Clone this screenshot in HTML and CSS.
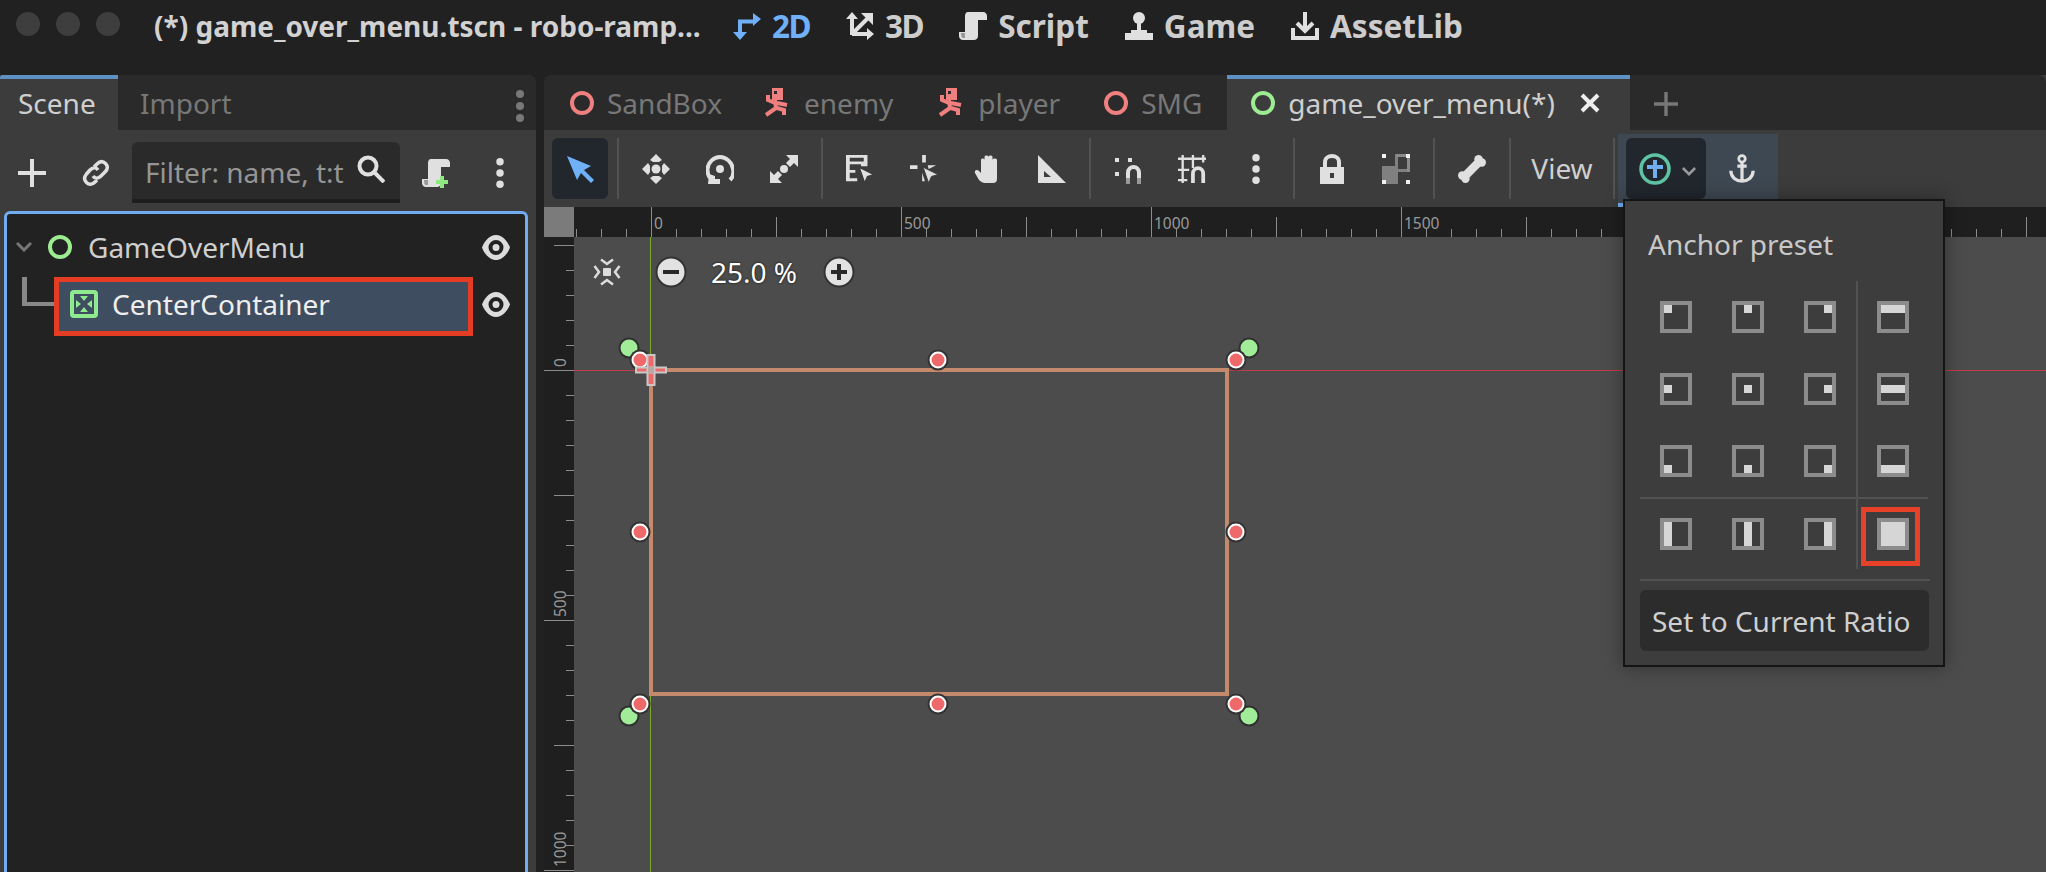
FILE: index.html
```html
<!DOCTYPE html>
<html lang="en">
<head>
    <meta charset="UTF-8">
    <title>game_over_menu.tscn - robo-ramp</title>
    <link rel="stylesheet" href="styles.css">
</head>
<body>
<svg class="defs" aria-hidden="true">
    <symbol id="i-2d" viewBox="0 0 28 28">
        <path d="M7 22V9.500H22" fill="none" stroke="currentColor" stroke-width="4"/>
        <path d="M0 20H14L7 28ZM20 1L28 7L20 14Z" fill="currentColor"/>
    </symbol>
    <symbol id="i-3d" viewBox="0 0 28 28">
        <path d="M6 23V6M6 22H23M6 22L23 5" fill="none" stroke="currentColor" stroke-width="4"/>
        <path d="M0 7L6 0L12 7ZM21 16L28 22L21 28ZM15 1H27V13Z" fill="currentColor"/>
    </symbol>
    <symbol id="i-script" viewBox="0 0 28 28">
        <path d="M9 0H24C26.500 0 28 2 28 4V8H19V24C19 26.500 17 28 15 28H4C1.500 28 0 26 0 24V20H6V4C6 2 7 0 9 0Z" fill="currentColor"/>
        <path d="M2 21H6V26H4C2.500 26 2 24 2 21Z" fill="#999"/>
    </symbol>
    <symbol id="i-game" viewBox="0 0 28 28">
        <circle cx="14" cy="6" r="6" fill="currentColor"/>
        <path d="M12 10H16V18H22V21H28V28H0V21H6V18H12Z" fill="currentColor"/>
    </symbol>
    <symbol id="i-asset" viewBox="0 0 28 28">
        <path d="M14 0V17M6 11L14 19L22 11M2 16V26H26V16" fill="none" stroke="currentColor" stroke-width="4"/>
    </symbol>
    <symbol id="i-runner" viewBox="0 0 28 30">
        <path fill-rule="evenodd" d="M9 0H20V12H9ZM11 3V6H14V3Z" fill="currentColor"/>
        <path d="M12 12L13 20L3 27M14 20L21 22L21 27M12 15L5 12L5 7M14 15L24 17" fill="none" stroke="currentColor" stroke-width="4"/>
    </symbol>
    <symbol id="i-eye" viewBox="0 0 28 25">
        <path fill-rule="evenodd" d="M14 0C7 0 2 7 0 12.500C2 18 7 25 14 25S26 18 28 12.500C26 7 21 0 14 0ZM14 5A7.500 7.500 0 1 1 14 20A7.500 7.500 0 1 1 14 5ZM14 9A3.500 3.500 0 1 0 14 16A3.500 3.500 0 1 0 14 9Z" fill="currentColor"/>
    </symbol>
    <symbol id="i-plus" viewBox="0 0 28 28">
        <path d="M14 0V28M0 14H28" fill="none" stroke="currentColor" stroke-width="4"/>
    </symbol>
    <symbol id="i-vdots" viewBox="0 0 28 32">
        <circle cx="14" cy="4" r="4" fill="currentColor"/>
        <circle cx="14" cy="16" r="4" fill="currentColor"/>
        <circle cx="14" cy="28" r="4" fill="currentColor"/>
    </symbol>
    <symbol id="i-link" viewBox="0 0 28 28">
        <path d="M12 8L15 5C18 2 21 2 23.500 4.500C26 7 26 10 23 13L19 17C16 20 13 20 11 17M16 11C14 8 11 8 8 11L4.500 15C2 18 2 21 4.500 23.500C7 26 10 26 13 23L15 21" fill="none" stroke="currentColor" stroke-width="3.500"/>
    </symbol>
    <symbol id="i-search" viewBox="0 0 28 28">
        <circle cx="11" cy="11" r="8.500" fill="none" stroke="currentColor" stroke-width="4"/>
        <path d="M17 17L27 27" stroke="currentColor" stroke-width="4"/>
    </symbol>
    <symbol id="i-arrow" viewBox="0 0 28 28">
        <path d="M0 0L24 10L17 14L27 24L24 27L14 17L10 24Z" fill="currentColor" transform="translate(1 1)"/>
    </symbol>
    <symbol id="i-move" viewBox="0 0 28 30">
        <circle cx="14" cy="15" r="4.500" fill="currentColor"/>
        <path d="M14 0L20 6L17 8H11L8 6ZM14 30L20 24L17 22H11L8 24ZM0 15L6 9L8 12V18L6 21ZM28 15L22 9L20 12V18L22 21Z" fill="currentColor"/>
    </symbol>
    <symbol id="i-rotate" viewBox="0 0 28 30">
        <circle cx="14" cy="15" r="4" fill="currentColor"/>
        <path d="M24 26C27 23 28 19 27 15C26 8 20 3 14 3C8 3 2 8 1.500 15C1.300 18 2 21 4 24" fill="none" stroke="currentColor" stroke-width="4"/>
        <path d="M3 20L9 22L9 25H14V30H2Z" fill="currentColor"/>
    </symbol>
    <symbol id="i-scale" viewBox="0 0 28 30">
        <circle cx="14" cy="15" r="4" fill="currentColor"/>
        <path d="M16 1H28V13L24 9L20 13L16 9L20 5ZM0 17L4 21L8 17L12 21L8 25L12 29H0Z" fill="currentColor"/>
    </symbol>
    <symbol id="i-list" viewBox="0 0 30 30">
        <path fill-rule="evenodd" d="M0 0H23V12H16V10H4V16H10V19H4V25H12V28H0ZM4 3V7H19V3Z" fill="currentColor"/>
        <path d="M14 13L30 21L23 23L20 30Z" fill="currentColor" stroke="#3c3c3c" stroke-width="1.500"/>
    </symbol>
    <symbol id="i-click" viewBox="0 0 30 30">
        <path d="M13 0H17V8H13ZM0 11H8V15H0ZM13 19V28H16L13 19ZM19 11H28L20 15Z" fill="currentColor"/>
        <path d="M14 13L30 21L23 23L20 30Z" fill="currentColor" stroke="#3c3c3c" stroke-width="1"/>
    </symbol>
    <symbol id="i-hand" viewBox="0 0 28 28">
        <path d="M7 5C7 3 10.500 3 10.500 5V2C10.500 0 14.500 0 14.500 2V4V2C14.500 0 18.500 0 18.500 2V5C18.500 3 23 3 23 5V24C23 27 21 28 19 28H11C9 28 7 27 5 25L1 18C0 15.500 3 14 5 16L7 18Z" fill="currentColor"/>
    </symbol>
    <symbol id="i-ruler" viewBox="0 0 28 28">
        <path fill-rule="evenodd" d="M0 0L28 28H0ZM6 16V22H13Z" fill="currentColor"/>
    </symbol>
    <symbol id="i-snap" viewBox="0 0 28 30">
        <path d="M14 29V19C14 11 25 11 25 19V29" fill="none" stroke="currentColor" stroke-width="4"/>
        <path d="M12 24H16V30H12ZM23 24H27V30H23Z" fill="#999"/>
        <path d="M1 4H5V8H1ZM14 4H18V8H14ZM1 18H5V22H1Z" fill="currentColor"/>
    </symbol>
    <symbol id="i-gridsnap" viewBox="0 0 30 30">
        <path d="M5 0V30M16 0V14M27 0V8M0 4H30M0 16H12M0 27H10" fill="none" stroke="currentColor" stroke-width="2.500"/>
        <path d="M16 30V20C16 12 27 12 27 20V30" fill="none" stroke="currentColor" stroke-width="4"/>
    </symbol>
    <symbol id="i-lock" viewBox="0 0 24 30">
        <path fill-rule="evenodd" d="M0 13H24V30H0ZM10 19V24H14V19Z" fill="currentColor"/>
        <path d="M5 14V8C5 0 19 0 19 8V14" fill="none" stroke="currentColor" stroke-width="4"/>
    </symbol>
    <symbol id="i-group" viewBox="0 0 28 30">
        <path d="M0 12H13V0H16V15H28V18H16V30H0Z" fill="#808080"/>
        <path d="M14 0H28V18H25V3H14Z" fill="#8a8a8a"/>
        <path d="M0 0H4V4H0ZM24 0H28V4H24ZM0 26H4V30H0ZM24 26H28V30H24Z" fill="#f0f0f0"/>
    </symbol>
    <symbol id="i-bone" viewBox="0 0 30 30">
        <path d="M7 23L23 7" stroke="currentColor" stroke-width="9"/>
        <circle cx="22" cy="4.500" r="4.500" fill="currentColor"/>
        <circle cx="25.500" cy="8" r="4.500" fill="currentColor"/>
        <circle cx="4.500" cy="22" r="4.500" fill="currentColor"/>
        <circle cx="8" cy="25.500" r="4.500" fill="currentColor"/>
    </symbol>
    <symbol id="i-anchor" viewBox="0 0 28 32">
        <circle cx="14" cy="5" r="3.500" fill="none" stroke="currentColor" stroke-width="3"/>
        <path d="M14 8V30M9 13H19M2 18C2 25 8 29 14 29S26 25 26 18" fill="none" stroke="currentColor" stroke-width="3.500"/>
    </symbol>
    <symbol id="i-focus" viewBox="0 0 28 28">
        <rect x="10" y="10" width="8" height="8" rx="1" fill="currentColor"/>
        <path d="M8 1.500L14 6L20 1.500M8 26.500L14 22L20 26.500M1.500 8L6 14L1.500 20M26.500 8L22 14L26.500 20" fill="none" stroke="currentColor" stroke-width="2.500"/>
    </symbol>
    <g id="h-red">
        <circle r="10.500" fill="#333"/>
        <circle r="8.500" fill="#fff"/>
        <circle r="6.500" fill="#ee6a6a"/>
    </g>
    <g id="h-green">
        <circle r="10.500" fill="#2f2f2f"/>
        <circle r="8.500" fill="#a0ec98"/>
    </g>
    <pattern id="ticks-x" x="77" width="250" height="30" patternUnits="userSpaceOnUse">
        <path d="M0.500 0V30M25.500 22V30M50.500 22V30M75.500 22V30M100.500 22V30M125.500 10V30M150.500 22V30M175.500 22V30M200.500 22V30M225.500 22V30" stroke="#8c8c8c"/>
    </pattern>
    <pattern id="ticks-y" y="133" width="30" height="250" patternUnits="userSpaceOnUse">
        <path d="M0 0.500H30M22 25.500H30M22 50.500H30M22 75.500H30M22 100.500H30M10 125.500H30M22 150.500H30M22 175.500H30M22 200.500H30M22 225.500H30" stroke="#8c8c8c"/>
    </pattern>
</svg>

<div class="titlebar">
    <div class="lights"><span></span><span></span><span></span></div>
    <div class="doc-title">(*) game_over_menu.tscn - robo-ramp...</div>
    <div class="modes">
        <div class="mode mode-on mode-short"><svg><use href="#i-2d"/></svg>2D</div>
        <div class="mode mode-short"><svg><use href="#i-3d"/></svg>3D</div>
        <div class="mode"><svg><use href="#i-script"/></svg>Script</div>
        <div class="mode"><svg><use href="#i-game"/></svg>Game</div>
        <div class="mode"><svg><use href="#i-asset"/></svg>AssetLib</div>
    </div>
</div>

<div class="main">
    <!-- Scene dock -->
    <div class="dock">
        <div class="tabs">
            <div class="tab tab-on tab-scene">Scene</div>
            <div class="tab tab-import">Import</div>
            <svg class="dock-menu"><use href="#i-vdots"/></svg>
        </div>
        <div class="dock-tools">
            <div class="tool"><svg class="ic"><use href="#i-plus"/></svg></div>
            <div class="tool"><svg class="ic"><use href="#i-link"/></svg></div>
            <div class="filter">
                <span>Filter: name, t:t</span>
                <svg class="ic"><use href="#i-search"/></svg>
            </div>
            <div class="tool">
                <svg class="ic"><use href="#i-script"/></svg>
                <svg class="badge" viewBox="0 0 12 12"><path d="M6 0V12M0 6H12" stroke="#8eea80" stroke-width="4"/></svg>
            </div>
            <div class="tool"><svg class="ic ic-tall"><use href="#i-vdots"/></svg></div>
        </div>
        <div class="tree">
            <div class="row row-root">
                <svg class="chevron" viewBox="0 0 16 10"><path d="M1 1L8 8L15 1" fill="none" stroke="#777" stroke-width="3"/></svg>
                <span class="ring ring-green"></span>
                <span class="row-name">GameOverMenu</span>
                <svg class="eye"><use href="#i-eye"/></svg>
            </div>
            <div class="row row-child">
                <span class="branch"></span>
                <div class="row-selected">
                    <svg class="node-icon" viewBox="0 0 28 28">
                        <rect x="2" y="2" width="24" height="24" rx="2" fill="none" stroke="#8eea8e" stroke-width="4"/>
                        <path d="M10 6H18L14 11ZM10 22H18L14 17ZM6 10V18L11 14ZM22 10V18L17 14Z" fill="#8eea8e"/>
                    </svg>
                    <span class="row-name">CenterContainer</span>
                </div>
                <svg class="eye"><use href="#i-eye"/></svg>
            </div>
        </div>
    </div>

    <!-- Main editor -->
    <div class="editor">
        <div class="tabs">
            <div class="tab tab-script tab-first"><span class="ring ring-red"></span>SandBox</div>
            <div class="tab tab-script"><svg class="runner"><use href="#i-runner"/></svg>enemy</div>
            <div class="tab tab-script"><svg class="runner"><use href="#i-runner"/></svg>player</div>
            <div class="tab tab-script tab-smg"><span class="ring ring-red"></span>SMG</div>
            <div class="tab tab-on tab-current">
                <span class="ring ring-green"></span>game_over_menu(*)
                <svg class="close" viewBox="0 0 20 20"><path d="M2 2L18 18M18 2L2 18" stroke="#eee" stroke-width="4"/></svg>
            </div>
            <svg class="new-tab"><use href="#i-plus"/></svg>
        </div>

        <div class="toolbar">
            <div class="tool tool-on"><svg class="ic ic-blue"><use href="#i-arrow"/></svg></div>
            <i class="sep"></i>
            <div class="tool"><svg class="ic ic-tall"><use href="#i-move"/></svg></div>
            <div class="tool"><svg class="ic ic-tall"><use href="#i-rotate"/></svg></div>
            <div class="tool"><svg class="ic ic-tall"><use href="#i-scale"/></svg></div>
            <i class="sep"></i>
            <div class="tool"><svg class="ic ic-tall"><use href="#i-list"/></svg></div>
            <div class="tool"><svg class="ic ic-tall"><use href="#i-click"/></svg></div>
            <div class="tool"><svg class="ic"><use href="#i-hand"/></svg></div>
            <div class="tool"><svg class="ic"><use href="#i-ruler"/></svg></div>
            <i class="sep"></i>
            <div class="tool"><svg class="ic ic-tall"><use href="#i-snap"/></svg></div>
            <div class="tool"><svg class="ic ic-tall"><use href="#i-gridsnap"/></svg></div>
            <div class="tool"><svg class="ic ic-tall"><use href="#i-vdots"/></svg></div>
            <i class="sep"></i>
            <div class="tool"><svg class="ic ic-tall"><use href="#i-lock"/></svg></div>
            <div class="tool"><svg class="ic ic-tall"><use href="#i-group"/></svg></div>
            <i class="sep"></i>
            <div class="tool"><svg class="ic ic-tall"><use href="#i-bone"/></svg></div>
            <i class="sep"></i>
            <div class="tool tool-view">View</div>
            <i class="sep"></i>
            <div class="anchor-group">
                <div class="tool tool-on tool-layout">
                    <svg class="layout-icon" viewBox="0 0 32 32">
                        <circle cx="16" cy="16" r="14" fill="none" stroke="#5fc4a4" stroke-width="3.500"/>
                        <path d="M16 7V25M8 14H24" stroke="#70aef0" stroke-width="4"/>
                    </svg>
                    <svg class="layout-chevron" viewBox="0 0 16 10"><path d="M1 1L8 8L15 1" fill="none" stroke="#999" stroke-width="3"/></svg>
                </div>
                <div class="tool tool-anchor"><svg class="ic ic-tall"><use href="#i-anchor"/></svg></div>
            </div>
        </div>

        <div class="viewport">
            <div class="ruler-top">
                <div class="ruler-corner"></div>
                <svg class="ruler-x">
                    <rect width="1472" height="30" fill="url(#ticks-x)"/>
                    <text x="80" y="22">0</text>
                    <text x="330" y="22">500</text>
                    <text x="580" y="22">1000</text>
                    <text x="830" y="22">1500</text>
                </svg>
            </div>
            <div class="view-body">
                <svg class="ruler-y">
                    <rect width="30" height="635" fill="url(#ticks-y)"/>
                    <text transform="translate(22 130) rotate(-90)">0</text>
                    <text transform="translate(22 380) rotate(-90)">500</text>
                    <text transform="translate(22 630) rotate(-90)">1000</text>
                </svg>
                <div class="canvas">
                    <svg class="scene" viewBox="574 237 1472 635">
                        <path d="M574 370.500H2046" stroke="#c03c4c"/>
                        <path d="M650.500 237V872" stroke="#7aa82a"/>
                        <path d="M629 348L640 360M1249 348L1236 360M629 716L640 704M1249 716L1236 704" stroke="#5a9a5c" stroke-width="2"/>
                        <rect x="651" y="370" width="576" height="324" fill="none" stroke="#c48a6c" stroke-width="4"/>
                        <use href="#h-green" x="629" y="348"/>
                        <use href="#h-green" x="1249" y="348"/>
                        <use href="#h-green" x="629" y="716"/>
                        <use href="#h-green" x="1249" y="716"/>
                        <use href="#h-red" x="640" y="360"/>
                        <use href="#h-red" x="938" y="360"/>
                        <use href="#h-red" x="1236" y="360"/>
                        <use href="#h-red" x="640" y="532"/>
                        <use href="#h-red" x="1236" y="532"/>
                        <use href="#h-red" x="640" y="704"/>
                        <use href="#h-red" x="938" y="704"/>
                        <use href="#h-red" x="1236" y="704"/>
                        <path d="M636 367.500H666V372.500H636ZM647.500 355H654.500V385H647.500Z" fill="#ee6a6a" stroke="#c8c8c8" stroke-width="2"/>
                        <rect x="648" y="367" width="6" height="6" fill="#b9a9a0"/>
                    </svg>
                    <div class="zoom-bar">
                        <svg class="ic focus"><use href="#i-focus"/></svg>
                        <svg class="zoom-btn" viewBox="0 0 32 32"><circle cx="16" cy="16" r="14.500" fill="#e2e2e2" stroke="#333" stroke-width="2"/><path d="M8 16H24" stroke="#2a2a2a" stroke-width="4"/></svg>
                        <span class="zoom-val">25.0 %</span>
                        <svg class="zoom-btn" viewBox="0 0 32 32"><circle cx="16" cy="16" r="14.500" fill="#e2e2e2" stroke="#333" stroke-width="2"/><path d="M8 16H24M16 8V24" stroke="#2a2a2a" stroke-width="4"/></svg>
                    </div>
                </div>
            </div>
        </div>

        <!-- Anchor preset popup -->
        <div class="popup">
            <div class="popup-title">Anchor preset</div>
            <div class="presets">
                <i class="vline"></i>
                <i class="hline"></i>
                <div class="cell"><span class="preset"><b class="m-tl"></b></span></div>
                <div class="cell"><span class="preset"><b class="m-tc"></b></span></div>
                <div class="cell"><span class="preset"><b class="m-tr"></b></span></div>
                <div class="cell"><span class="preset"><b class="m-top"></b></span></div>
                <div class="cell"><span class="preset"><b class="m-cl"></b></span></div>
                <div class="cell"><span class="preset"><b class="m-cc"></b></span></div>
                <div class="cell"><span class="preset"><b class="m-cr"></b></span></div>
                <div class="cell"><span class="preset"><b class="m-hmid"></b></span></div>
                <div class="cell"><span class="preset"><b class="m-bl"></b></span></div>
                <div class="cell"><span class="preset"><b class="m-bc"></b></span></div>
                <div class="cell"><span class="preset"><b class="m-br"></b></span></div>
                <div class="cell"><span class="preset"><b class="m-bottom"></b></span></div>
                <div class="cell"><span class="preset"><b class="m-left"></b></span></div>
                <div class="cell"><span class="preset"><b class="m-vmid"></b></span></div>
                <div class="cell"><span class="preset"><b class="m-right"></b></span></div>
                <div class="cell"><span class="preset preset-marked"><b class="m-full"></b></span></div>
            </div>
            <i class="popup-rule"></i>
            <div class="ratio-btn">Set to Current Ratio</div>
        </div>
    </div>
</div>
</body>
</html>
```
FILE: styles.css
```css
* { box-sizing: border-box; }
html, body { height: 100%; }
body {
    margin: 0;
    overflow: hidden;
    background: #212121;
    color: #cfcfcf;
    font-family: "Noto Sans", sans-serif;
    font-size: 28px;
    line-height: 1;
}
.defs { position: absolute; width: 0; height: 0; }

/* title bar */
.titlebar { display: flex; height: 75px; }
.lights { display: flex; gap: 16px; padding: 12px 0 0 16px; width: 154px; }
.lights span { width: 24px; height: 24px; border-radius: 50%; background: #3e3e3e; }
.doc-title { font-weight: 700; width: 579px; padding-top: 8px; white-space: nowrap; line-height: 36px; color: #d2d2d2; }
.modes { display: flex; gap: 36px; }
.mode { display: flex; gap: 11px; font-size: 31.5px; font-weight: 700; height: 36px; margin-top: 8px; line-height: 36px; color: #cdcdcd; }
.mode svg { width: 28px; height: 28px; margin-top: 4px; color: #e0e0e0; }
.mode-short { letter-spacing: -1.5px; }
.mode-on, .mode-on svg { color: #70b0f8; }

/* docks */
.main { display: flex; height: 797px; gap: 8px; overflow: hidden; }
.dock { width: 536px; flex: none; background: #3c3c3c; border-radius: 8px 8px 0 0; }
.editor { flex: 1; position: relative; background: #3c3c3c; border-radius: 8px 0 0 0; }

.tabs { display: flex; height: 55px; background: #2a2a2a; border-radius: 8px 8px 0 0; position: relative; }
.tab { display: flex; align-items: center; border-top: 4px solid transparent; white-space: nowrap; color: #777; padding-bottom: 4px; }
.tab-on { background: #3c3c3c; border-top-color: #5f91c4; color: #cfcfcf; }
.tab-scene { width: 118px; padding-left: 18px; border-top-left-radius: 2px; }
.tab-import { padding-left: 22px; }
.dock-menu { position: absolute; left: 506px; top: 15px; width: 28px; height: 32px; color: #787878; }
.tab-script { padding: 0 22px 4px 22px; gap: 13px; }
.tab-first { padding: 0 19px 4px 26px; }
.tab-smg { padding-right: 25px; }
.tab-current { padding-left: 24px; gap: 13px; width: 403px; }
.close { width: 20px; height: 20px; margin-left: 12px; }
.new-tab { width: 24px; height: 24px; margin: 17px 0 0 24px; color: #777; }

.ring { width: 24px; height: 24px; border-radius: 50%; border: 4px solid; flex: none; }
.ring-red { border-color: #f08080; }
.ring-green { border-color: #9cec92; }
.runner { width: 28px; height: 30px; color: #f08080; }

/* tools */
.tool { width: 56px; height: 61px; flex: none; display: flex; align-items: center; justify-content: center; border-radius: 6px; position: relative; }
.tool-on { background: #22272e; }
.ic { width: 28px; height: 28px; color: #e0e0e0; }
.ic-tall { height: 30px; }
.ic-blue { color: #70b0f8; }
.sep { width: 2px; height: 61px; margin: 0 1px; background: #525252; flex: none; }

.dock-tools { display: flex; gap: 8px; padding: 12px 0 0 4px; height: 81px; }
.filter { width: 268px; height: 61px; display: flex; align-items: center; justify-content: space-between; padding: 2px 15px 0 13px; background: #2a2a2a; border-bottom: 4px solid #1e1e1e; border-radius: 6px 6px 0 0; color: #959595; }
.filter .ic { margin-top: -5px; }
.badge { position: absolute; left: 28px; top: 34px; width: 12px; height: 12px; }

/* scene tree */
.tree { margin: 0 8px 0 4px; height: 680px; background: #222; border: 3px solid #72acf0; border-radius: 6px 6px 0 0; }
.row { display: flex; align-items: center; color: #cfcfcf; }
.row-name { white-space: nowrap; }
.row-root { height: 63px; padding-top: 3px; }
.chevron { width: 16px; height: 10px; margin: 0 16px 0 9px; }
.row-root .row-name { margin-left: 16px; padding-bottom: 1px; }
.row-root .eye { margin-left: auto; margin-right: 15px; }
.eye { width: 28px; height: 25px; color: #dcdcdc; flex: none; }
.row-child { height: 59px; }
.row-child > .eye { margin-top: -4px; }
.branch { width: 32px; height: 29px; margin-left: 15px; align-self: flex-start; border-left: 5px solid #888; border-bottom: 4px solid #888; flex: none; }
.row-selected { width: 419px; height: 59px; flex: none; display: flex; align-items: center; gap: 14px; padding: 0 0 5px 11px; margin-right: 9px; background: #3e4d5f; border: 5px solid #e53d24; color: #eee; }
.node-icon { width: 28px; height: 28px; flex: none; }

/* main toolbar */
.toolbar { display: flex; gap: 8px; height: 77px; padding: 8px 0 0 8px; align-items: flex-start; }
.tool-view { width: 84px; color: #cfcfcf; padding-bottom: 1px; }
.anchor-group { display: flex; height: 73px; width: 160px; margin: -4px 0 0 -6px; padding: 4px 0 0 8px; background: #3e4852; position: relative; }
.anchor-group::after { content: ""; position: absolute; left: 0; bottom: 0; width: 7px; height: 4px; background: #70aef0; }
.tool-layout { width: 80px; gap: 11px; padding-left: 3px; }
.layout-icon { width: 32px; height: 32px; }
.layout-chevron { width: 14px; height: 9px; margin-top: 6px; }
.tool-anchor { width: 72px; }
.tool-anchor .ic { width: 26px; height: 32px; }

/* viewport */
.viewport { height: 665px; }
.ruler-top { display: flex; height: 30px; background: #1f1f1f; }
.ruler-corner { width: 30px; background: #7b7b7b; flex: none; }
.ruler-x { width: 1472px; height: 30px; }
.ruler-x text, .ruler-y text { font-size: 15.5px; fill: #999; }
.view-body { display: flex; height: 635px; }
.ruler-y { width: 30px; height: 635px; background: #1f1f1f; flex: none; }
.canvas { flex: 1; background: #4c4c4c; position: relative; }
.scene { width: 1472px; height: 635px; display: block; }
.zoom-bar { position: absolute; left: 19px; top: 16px; height: 38px; display: flex; align-items: center; }
.focus { color: #dcdcdc; }
.zoom-btn { width: 32px; height: 32px; }
.focus + .zoom-btn { margin-left: 34px; }
.zoom-val { color: #fff; margin: 0 26px 0 24px; padding-bottom: 1px; white-space: nowrap; text-shadow: 0 0 2px #222, 0 0 2px #222; }

/* anchor preset popup */
.popup { position: absolute; left: 1079px; top: 124px; width: 322px; height: 468px; background: #3d3d3d; border: 2px solid #151515; box-shadow: 0 0 18px rgba(0, 0, 0, 0.35); padding: 0 0 0 15px; }
.popup-title { height: 80px; padding: 26px 0 0 8px; line-height: 34px; white-space: nowrap; color: #c8c8c8; }
.presets { display: grid; width: 290px; grid-template-columns: 72px 72px 72px 2px 70px; grid-template-rows: 72px 72px 72px 2px 70px; }
.vline { grid-column: 4; grid-row: 1 / -1; background: #525252; }
.hline { grid-row: 4; grid-column: 1 / -1; background: #525252; }
.cell { display: flex; align-items: center; justify-content: center; }
.preset { width: 32px; height: 32px; border: 4px solid #8c8c8c; position: relative; display: block; }
.preset b { position: absolute; background: #d6d6d6; }
.preset-marked::after { content: ""; position: absolute; left: -20px; right: -15px; top: -15px; bottom: -20px; border: 5px solid #e8412a; }
.m-tl, .m-tc, .m-tr, .m-cl, .m-cc, .m-cr, .m-bl, .m-bc, .m-br { width: 8px; height: 8px; }
.m-tl { left: 0; top: 0; }
.m-tc { left: 8px; top: 0; }
.m-tr { right: 0; top: 0; }
.m-cl { left: 0; top: 8px; }
.m-cc { left: 8px; top: 8px; }
.m-cr { right: 0; top: 8px; }
.m-bl { left: 0; bottom: 0; }
.m-bc { left: 8px; bottom: 0; }
.m-br { right: 0; bottom: 0; }
.m-top, .m-hmid, .m-bottom { left: 0; right: 0; height: 8px; }
.m-top { top: 0; }
.m-hmid { top: 8px; }
.m-bottom { bottom: 0; }
.m-left, .m-vmid, .m-right { top: 0; bottom: 0; width: 8px; }
.m-left { left: 0; }
.m-vmid { left: 8px; }
.m-right { right: 0; }
.m-full { left: 0; right: 0; top: 0; bottom: 0; }
.popup-rule { display: block; width: 290px; height: 2px; margin-top: 10px; background: #525252; }
.ratio-btn { width: 289px; height: 61px; margin-top: 9px; padding: 0 0 0 12px; display: flex; align-items: center; background: #2c2c2c; border-radius: 6px; white-space: nowrap; color: #cfcfcf; }
```
